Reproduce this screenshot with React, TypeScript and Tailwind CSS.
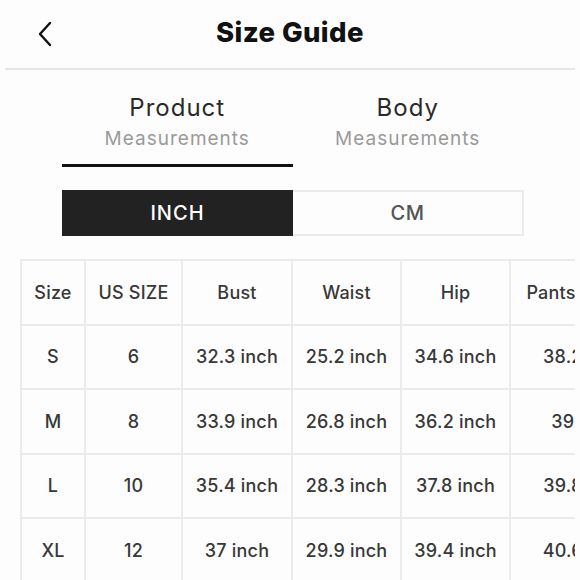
import React from "react";

const cols = ["w-[64px]", "w-[97px]", "w-[110px]", "w-[109px]", "w-[109px]", "w-[148px]"];
const header = ["Size", "US SIZE", "Bust", "Waist", "Hip", "Pants Length"];
const rows = [
  ["S", "6", "32.3 inch", "25.2 inch", "34.6 inch", "38.2 inch"],
  ["M", "8", "33.9 inch", "26.8 inch", "36.2 inch", "39 inch"],
  ["L", "10", "35.4 inch", "28.3 inch", "37.8 inch", "39.8 inch"],
  ["XL", "12", "37 inch", "29.9 inch", "39.4 inch", "40.6 inch"],
];

function Row({ cells }: { cells: string[] }) {
  return (
    <div className="flex border-b-2 border-[#ebebeb]">
      {cells.map((c, i) => (
        <div
          key={i}
          className={`${cols[i]} shrink-0 h-[62.5px] flex items-center justify-center border-r-2 border-[#ebebeb] text-[18px] tracking-[0.2px] font-medium text-[#383838] whitespace-nowrap`}
        >
          {c}
        </div>
      ))}
    </div>
  );
}

export default function App() {
  return (
    <div
      className="w-[580px] h-[580px] overflow-hidden bg-[#fdfdfd]"
      style={{ fontFamily: "Inter, 'Noto Sans', sans-serif" }}
    >
      <div className="mx-[5px] h-[70px] grid grid-cols-[1fr_auto_1fr] items-center border-b-2 border-[#e6e6e6]">
        <div className="pl-[32px] pb-[1px]">
          <svg width="16" height="26" viewBox="0 0 16 26" fill="none">
            <path d="M13 2 L3 13 L13 24" stroke="#111" strokeWidth="2.4" strokeLinecap="round" strokeLinejoin="round" />
          </svg>
        </div>
        <div className="text-[27.5px] font-extrabold text-[#111] tracking-[0.4px] pb-[2px]">Size Guide</div>
        <div />
      </div>

      <div className="mx-[62px] mt-[23px] grid grid-cols-2 w-[461px]">
        <div className="flex flex-col items-center">
          <div className="text-[24px] leading-[30px] tracking-[1px] text-[#2a2a2a]">Product</div>
          <div className="text-[19px] leading-[24px] tracking-[1px] mt-[4px] text-[#9a9a9a]">Measurements</div>
          <div className="mt-[13px] h-[3px] w-full bg-[#111]" />
        </div>
        <div className="flex flex-col items-center">
          <div className="text-[24px] leading-[30px] tracking-[1px] text-[#2a2a2a]">Body</div>
          <div className="text-[19px] leading-[24px] tracking-[1px] mt-[4px] text-[#9a9a9a]">Measurements</div>
        </div>
      </div>

      <div className="mx-[62px] mt-[23px] flex w-[462px] h-[46px]">
        <div className="w-[231px] bg-[#222] flex items-center justify-center text-white text-[20px] tracking-[1px] font-medium">INCH</div>
        <div className="flex-1 border-2 border-l-0 border-[#ebebeb] flex items-center justify-center text-[#555] text-[20px] tracking-[0.5px] font-medium">CM</div>
      </div>

      <div className="mt-[23px] flex">
        <div className="ml-[20px] w-[555px] overflow-hidden">
          <div className="w-max border-l-2 border-t-2 border-[#ebebeb]">
            <Row cells={header} />
            {rows.map((r, i) => (
              <Row key={i} cells={r} />
            ))}
          </div>
        </div>
      </div>
    </div>
  );
}
